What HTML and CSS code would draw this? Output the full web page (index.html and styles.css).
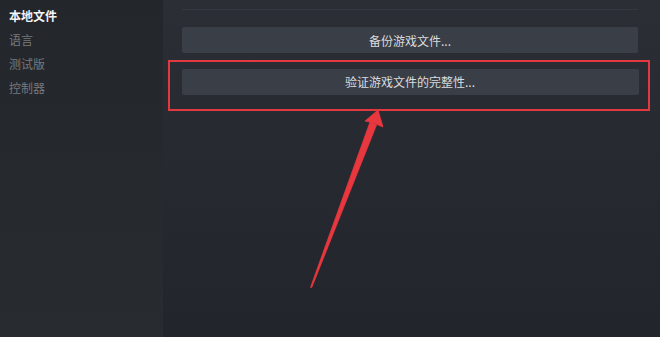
FILE: index.html
```html
<!DOCTYPE html>
<html lang="zh">
<head>
<meta charset="utf-8">
<link rel="stylesheet" href="styles.css">
</head>
<body>
<div class="page">
  <nav class="sidebar">
    <div class="nav-item active">本地文件</div>
    <div class="nav-item">语言</div>
    <div class="nav-item">测试版</div>
    <div class="nav-item">控制器</div>
  </nav>
  <main class="content">
    <div class="separator"></div>
    <button class="btn btn-first">备份游戏文件...</button>
    <div class="highlight">
      <button class="btn">验证游戏文件的完整性...</button>
    </div>
  </main>
  <svg class="arrow" width="660" height="337" viewBox="0 0 660 337">
    <path d="M310.5 287.5 L311.8 287.3 L376.5 125 L370 122 Z" fill="#e8373e" stroke="#e8373e" stroke-width="0.8" stroke-linejoin="round"/>
    <path d="M378 110 L383 127 L376 124 L370 122 L365 121 Z" fill="#e8373e" stroke="#e8373e" stroke-width="0.8" stroke-linejoin="round"/>
  </svg>
</div>
</body>
</html>
```
FILE: styles.css
```css
html, body {
  margin: 0;
  padding: 0;
}
body {
  width: 660px;
  height: 337px;
  overflow: hidden;
  background: #25282e;
  font-family: "Noto Sans CJK SC", "Noto Sans", sans-serif;
}
.page {
  position: relative;
  display: flex;
  width: 660px;
  height: 337px;
}
.sidebar {
  width: 163px;
  flex: none;
  background: linear-gradient(180deg, #23262b 0%, #282b30 100%);
  padding-top: 6px;
  box-sizing: border-box;
}
.nav-item {
  height: 24px;
  line-height: 20px;
  padding-left: 9px;
  font-size: 12px;
  color: #76797e;
}
.nav-item.active {
  color: #f2f3f4;
  font-weight: bold;
}
.content {
  flex: 1;
  background: linear-gradient(180deg, #2b2e35 0%, #272a31 40%, #22252c 100%);
  padding: 9px 22px 0 19px;
  box-sizing: border-box;
  display: flex;
  flex-direction: column;
}
.separator {
  height: 1px;
  background: #353840;
  margin-bottom: 17px;
}
.btn {
  display: block;
  width: 100%;
  height: 26px;
  border: none;
  border-radius: 2px;
  background: #3a3e47;
  color: #dadcde;
  font-family: "Noto Sans CJK SC", "Noto Sans", sans-serif;
  font-size: 12px;
  padding: 0;
  text-align: center;
}
.highlight {
  margin: 7px -12px 0 -14px;
  border: 2.5px solid #e2383f;
  padding: 6.5px 9.5px 13.5px 11.5px;
  height: 51px;
  box-sizing: border-box;
}
.arrow {
  position: absolute;
  left: 0;
  top: 0;
  pointer-events: none;
}
```
